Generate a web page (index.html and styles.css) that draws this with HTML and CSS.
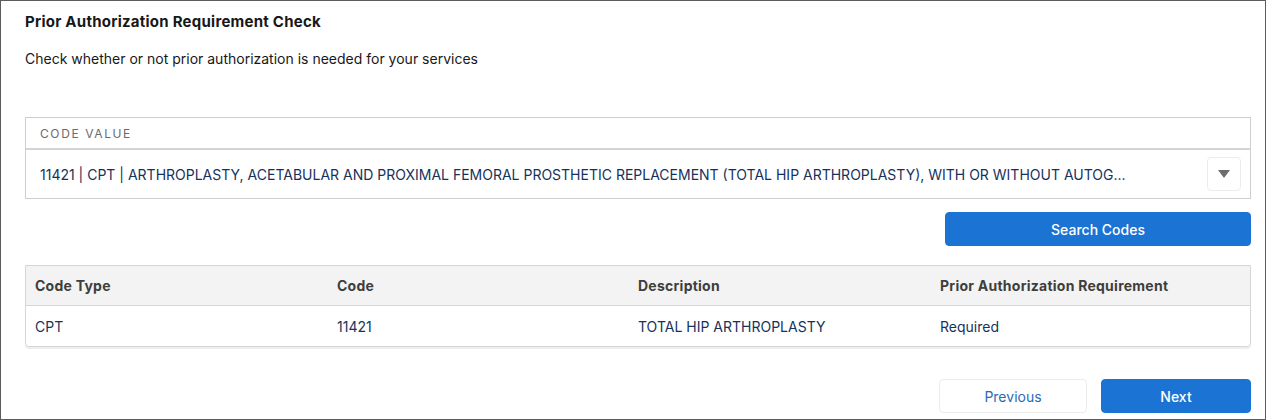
FILE: index.html
```html
<!DOCTYPE html>
<html lang="en">
<head>
<meta charset="utf-8">
<title>Prior Authorization Requirement Check</title>
<link rel="stylesheet" href="styles.css">
</head>
<body>
<div class="frame">
  <h1 class="title">Prior Authorization Requirement Check</h1>
  <p class="subtitle">Check whether or not prior authorization is needed for your services</p>

  <div class="code-box">
    <div class="code-label">CODE VALUE</div>
    <div class="code-value">
      <span class="code-text">11421 | CPT | ARTHROPLASTY, ACETABULAR AND PROXIMAL FEMORAL PROSTHETIC REPLACEMENT (TOTAL HIP ARTHROPLASTY), WITH OR WITHOUT AUTOG...</span>
      <button class="dropdown" type="button" aria-label="Open">
        <svg width="12" height="8" viewBox="0 0 12 8"><path d="M0 0 H12 L6 8 Z" fill="#706e6b"/></svg>
      </button>
    </div>
  </div>

  <div class="search-row">
    <button class="btn btn-primary btn-search" type="button">Search Codes</button>
  </div>

  <div class="table">
    <div class="row head">
      <div class="cell">Code Type</div>
      <div class="cell">Code</div>
      <div class="cell">Description</div>
      <div class="cell">Prior Authorization Requirement</div>
    </div>
    <div class="row body">
      <div class="cell">CPT</div>
      <div class="cell">11421</div>
      <div class="cell">TOTAL HIP ARTHROPLASTY</div>
      <div class="cell">Required</div>
    </div>
  </div>

  <div class="nav-row">
    <button class="btn btn-neutral btn-prev" type="button">Previous</button>
    <button class="btn btn-primary btn-next" type="button">Next</button>
  </div>
</div>
</body>
</html>
```

FILE: styles.css
```css
* { box-sizing: border-box; }
html, body { margin: 0; padding: 0; background: #fff; }
body {
  font-family: Inter, "Liberation Sans", Arial, sans-serif;
  font-size: 14px;
  color: #080707;
}
.frame {
  width: 1266px;
  height: 420px;
  border: 1px solid #5c5c5c;
  padding: 11px 14px 0 24px;
}
.title {
  margin: 0;
  font-size: 15px;
  line-height: 20px;
  font-weight: 700;
  letter-spacing: 0.25px;
  color: #181818;
}
.subtitle {
  margin: 17px 0 0;
  font-size: 14px;
  line-height: 20px;
  color: #181818;
}
.code-box {
  margin-top: 48px;
  border: 1px solid #cfcfcf;
}
.code-label {
  height: 32px;
  line-height: 32px;
  padding-left: 14px;
  font-size: 12px;
  letter-spacing: 1.6px;
  color: #6b6b6b;
  border-bottom: 2px solid #d4d4d4;
}
.code-value {
  height: 48px;
  display: flex;
  align-items: center;
  padding: 0 9px 0 14px;
}
.code-text {
  flex: 1;
  font-size: 14px;
  color: #16325c;
  white-space: nowrap;
  overflow: hidden;
}
.dropdown {
  width: 34px;
  height: 34px;
  border: 1px solid #ececec;
  border-radius: 4px;
  background: #fff;
  display: flex;
  align-items: center;
  justify-content: center;
  padding: 0;
}
.search-row {
  display: flex;
  justify-content: flex-end;
  margin-top: 13px;
}
.btn {
  height: 34px;
  border-radius: 4px;
  font-family: inherit;
  font-size: 14px;
  font-weight: 500;
  padding: 0;
  cursor: pointer;
}
.btn-primary {
  background: #1b73d4;
  border: 1px solid #1b73d4;
  color: #fff;
}
.btn-neutral {
  background: #fff;
  border: 1px solid #ececec;
  color: #2a6bb8;
  font-weight: 400;
}
.btn-search { width: 306px; }
.table {
  margin-top: 19px;
  border: 1px solid #d6d6d6;
  border-radius: 0 0 4px 4px;
  box-shadow: 0 2px 1px rgba(0,0,0,0.07);
}
.row {
  display: grid;
  grid-template-columns: 302px 301px 302px 1fr;
  align-items: center;
}
.row.head {
  height: 40px;
  background: #f3f3f3;
  border-bottom: 1px solid #d6d6d6;
  font-weight: 700;
  letter-spacing: 0.25px;
  color: #3e3e3c;
}
.row.body {
  height: 40px;
  color: #16325c;
}
.cell { padding-left: 9px; white-space: nowrap; }
.nav-row {
  display: flex;
  justify-content: flex-end;
  gap: 14px;
  margin-top: 32px;
}
.btn-prev { width: 148px; }
.btn-next { width: 150px; }
```
